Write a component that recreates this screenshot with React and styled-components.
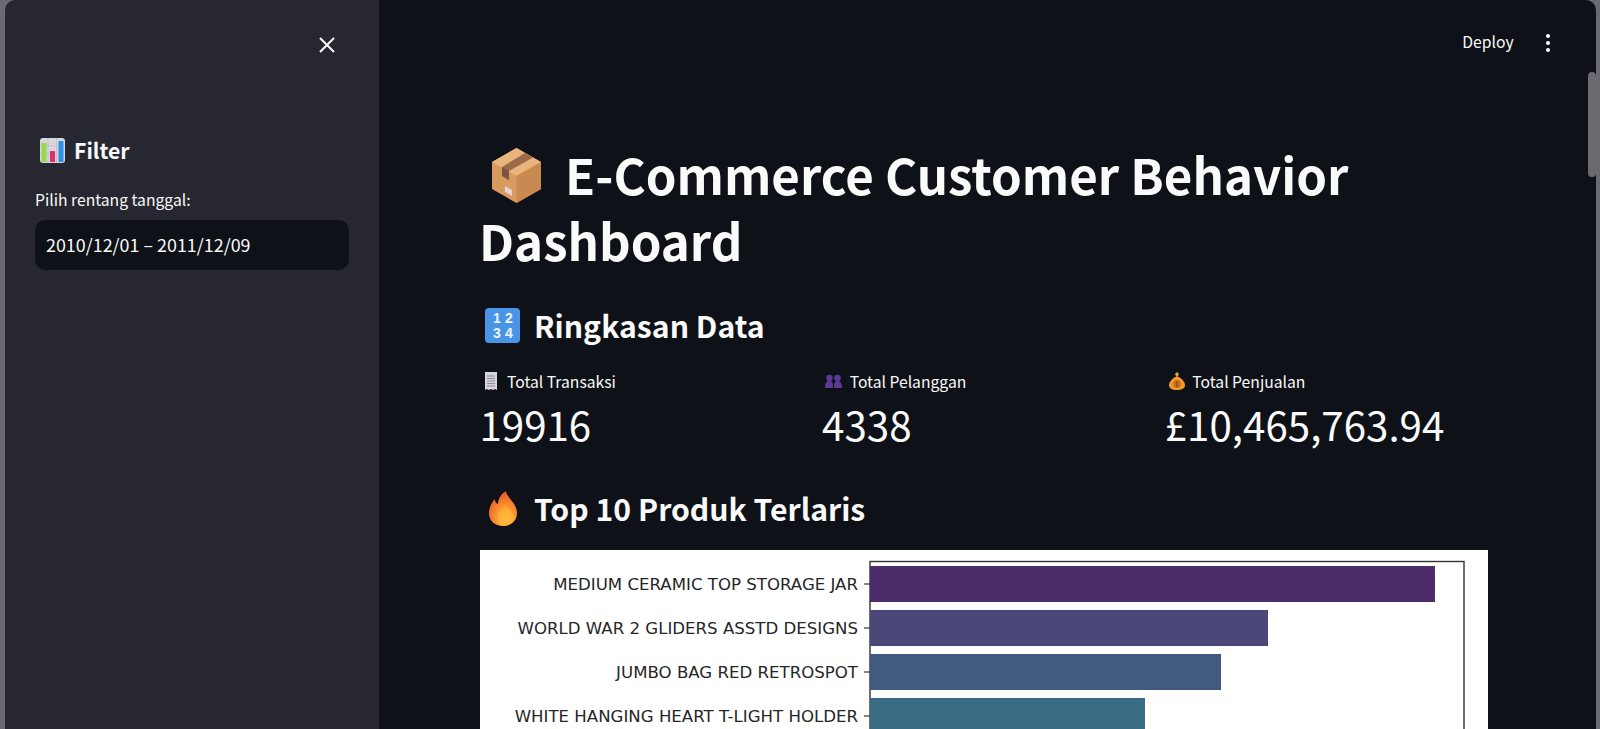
import React from 'react';
import styled, { createGlobalStyle } from 'styled-components';

const FONT = '"Noto Sans CJK JP", "Noto Sans", sans-serif';

const GlobalStyle = createGlobalStyle`
  html, body {
    margin: 0;
    height: 100%;
    overflow: hidden;
    background: #6a6b70;
  }
  #root {
    height: 100%;
  }
`;

const Window = styled.div`
  display: flex;
  height: 729px;
  padding: 0 4px 0 5px;
  font-family: ${FONT};
  color: #fafafa;
`;

const Sidebar = styled.aside`
  flex: 0 0 374px;
  box-sizing: border-box;
  padding: 0 30px 0 30px;
  background: #262730;
  border-top-left-radius: 10px;
`;

const CloseRow = styled.div`
  display: flex;
  justify-content: flex-end;
  height: 137px;
  padding: 36px 13px 0 0;
  box-sizing: border-box;
`;

const SideTitle = styled.h3`
  display: flex;
  align-items: center;
  gap: 9px;
  height: 26px;
  margin: 0 0 25px 5px;
  font-size: 21.2px;
  line-height: 26px;
  font-weight: 600;
`;

const FieldLabel = styled.label`
  display: block;
  font-size: 15.7px;
  line-height: 24px;
  margin-bottom: 8px;
`;

const DateInput = styled.div`
  box-sizing: border-box;
  height: 50px;
  width: 314px;
  padding: 0 11px 2px;
  display: flex;
  align-items: center;
  background: #0e1117;
  border-radius: 10px;
  font-size: 17.9px;
`;

const Main = styled.main`
  flex: 1;
  position: relative;
  min-width: 0;
  overflow: hidden;
  background: #0e1117;
  border-top-right-radius: 10px;
`;

const TopBar = styled.header`
  display: flex;
  justify-content: flex-end;
  align-items: center;
  gap: 32px;
  height: 86px;
  padding-right: 46px;
  font-size: 15.7px;
  span {
    margin-bottom: 4px;
  }
`;

const MenuDots = styled.div`
  display: flex;
  flex-direction: column;
  gap: 2.6px;
  i {
    display: block;
    width: 4.4px;
    height: 4.4px;
    border-radius: 50%;
    background: #fafafa;
  }
`;

const Scrollbar = styled.div`
  position: absolute;
  top: 72px;
  right: 0;
  width: 8px;
  height: 105px;
  background: #6a6b70;
  border-radius: 4px;
`;

const Content = styled.div`
  width: 1008px;
  margin-left: 101px;
`;

const Title = styled.h1`
  margin: 55px 0 0 -1px;
  font-size: 49.2px;
  line-height: 66px;
  font-weight: 700;
  letter-spacing: 0;
`;

const TitleIcon = styled.span`
  display: inline-block;
  width: 86px;
  height: 55px;
  vertical-align: -8px;
  padding-left: 13px;
  box-sizing: border-box;
`;

const Section = styled.h2`
  display: flex;
  align-items: center;
  gap: ${props => props.$gap}px;
  height: 44px;
  margin: ${props => props.$top}px 0 0;
  padding-left: ${props => props.$indent}px;
  font-size: 30.2px;
  line-height: 44px;
  font-weight: 600;
`;

const Metrics = styled.div`
  display: grid;
  grid-template-columns: repeat(3, 1fr);
  column-gap: 20px;
  margin-top: 21px;
`;

const MetricLabel = styled.div`
  display: flex;
  align-items: center;
  gap: ${props => props.$gap}px;
  height: 26px;
  padding-left: ${props => props.$pad}px;
  font-size: 15.7px;
`;

const MetricValue = styled.div`
  font-size: 40.3px;
  line-height: 60px;
  margin-left: -0.6px;
`;

const ChartFrame = styled.div`
  margin-top: 20px;
  height: 179px;
  background: #fff;
  overflow: hidden;
`;

const Box = styled.svg`
  display: block;
  flex: none;
`;

const ChartLabel = styled.text`
  font-family: "DejaVu Sans", sans-serif;
  font-size: 16.6px;
  fill: #262626;
`;

const BARS = [
  { label: 'MEDIUM CERAMIC TOP STORAGE JAR', width: 565, color: '#4c2c69' },
  { label: 'WORLD WAR 2 GLIDERS ASSTD DESIGNS', width: 398, color: '#4b4779' },
  { label: 'JUMBO BAG RED RETROSPOT', width: 351, color: '#435a80' },
  { label: 'WHITE HANGING HEART T-LIGHT HOLDER', width: 275, color: '#3a6c85' },
];

const Chart = () => (
  <svg width="1008" height="179" viewBox="0 0 1008 179">
    <rect x="390" y="11.5" width="594" height="180" fill="none" stroke="#333" strokeWidth="1.4" />
    {BARS.map((bar, i) => {
      const y = 16 + i * 44;
      return (
        <g key={bar.label}>
          <rect x="390" y={y} width={bar.width} height="36" fill={bar.color} />
          <line x1="384" x2="390" y1={y + 18} y2={y + 18} stroke="#333" strokeWidth="1.2" />
          <ChartLabel x="378" y={y + 24} textAnchor="end">{bar.label}</ChartLabel>
        </g>
      );
    })}
  </svg>
);

const CloseIcon = () => (
  <Box width="18" height="18" viewBox="0 0 18 18">
    <path d="M2 2 L16 16 M16 2 L2 16" stroke="#fafafa" strokeWidth="2" strokeLinecap="butt" />
  </Box>
);

const ChartEmoji = () => (
  <Box width="25" height="25" viewBox="0 0 25 25">
    <rect width="25" height="25" rx="3" fill="#d9d6de" />
    <path d="M0 8H25M0 16H25M8 0V25M16.500 0V25" stroke="#c4c0ca" strokeWidth="1" />
    <rect x="1.500" y="5" width="5" height="19" fill="#96d74c" />
    <rect x="10" y="13" width="5" height="11" fill="#e0316f" />
    <rect x="18.500" y="3" width="5" height="21" fill="#2f8fe6" />
  </Box>
);

const PackageEmoji = () => (
  <Box width="49" height="55" viewBox="0 0 49 55">
    <path d="M24.500 0 L49 14 V41 L24.500 55 L0 41 V14 Z" fill="#d99a5f" />
    <path d="M24.500 0 L49 14 L24.500 28 L0 14 Z" fill="#e8b57c" />
    <path d="M24.500 28 L49 14 V41 L24.500 55 Z" fill="#c98a52" />
    <path d="M33 5 L10 19 V28 L17 32 V23 L41 9.500 Z" fill="#9c6a48" />
    <path d="M10 19 L17 23 V32 L10 28 Z" fill="#7d5640" />
    <path d="M13 38 L20 42 V48 L13 44 Z" fill="#e6d3d8" />
  </Box>
);

const KeycapEmoji = () => (
  <Box width="35" height="35" viewBox="0 0 35 35">
    <rect width="35" height="35" rx="4" fill="#4a94e6" />
    <g fontFamily='"Liberation Sans", sans-serif' fontSize="14" fontWeight="700" fill="#eef5fc" textAnchor="middle">
      <text x="12" y="15">1</text>
      <text x="24" y="15">2</text>
      <text x="12" y="30">3</text>
      <text x="24" y="30">4</text>
    </g>
  </Box>
);

const ReceiptEmoji = () => (
  <Box width="14" height="18" viewBox="0 0 14 18">
    <path d="M1 0 H13 V18 L11 17 L9 18 L7 17 L5 18 L3 17 L1 18 Z" fill="#d8d4dc" />
    <path d="M3 4H11M3 6.500H11M3 9H11M3 11.500H11M3 14H11" stroke="#8f8b98" strokeWidth="1" />
  </Box>
);

const BustsEmoji = () => (
  <Box width="17" height="14" viewBox="0 0 17 14">
    <g fill="#5a3c96">
      <circle cx="4.500" cy="4" r="3.300" />
      <circle cx="12.500" cy="4" r="3.300" />
      <path d="M0 14 C0 8 2 7 4.500 7 C7 7 8 8 8 14 Z" />
      <path d="M9 14 C9 8 10 7 12.500 7 C15 7 17 8 17 14 Z" />
    </g>
  </Box>
);

const MoneyEmoji = () => (
  <Box width="16" height="18" viewBox="0 0 16 18">
    <path d="M8 0 L10 2 L8.500 5 H7.500 L6 2 Z" fill="#e3a13a" />
    <path d="M6 5 H10 C13 7 16 10 16 13 C16 16.500 13 18 8 18 C3 18 0 16.500 0 13 C0 10 3 7 6 5 Z" fill="#f09a2c" />
    <circle cx="8" cy="12" r="4" fill="#c9701f" />
    <path d="M8 9V15" stroke="#7d3f10" strokeWidth="1" />
  </Box>
);

const FireEmoji = () => (
  <Box width="28" height="35" viewBox="0 0 28 35">
    <defs>
      <radialGradient id="flame" cx="0.6" cy="0.8" r="0.8">
        <stop offset="0" stopColor="#ffd23f" />
        <stop offset="0.5" stopColor="#fb8c2e" />
        <stop offset="1" stopColor="#e2552f" />
      </radialGradient>
    </defs>
    <path
      d="M17 0 C17 6 28 12 28 22 C28 30 22 35 14 35 C6 35 0 30 0 22 C0 16 3 11 6 8 C6 11 7 12 9 13 C9 8 12 3 17 0 Z"
      fill="url(#flame)"
    />
    <path d="M17 13 C18 18 24 21 24 26 C24 31 20 35 15 35 C10 35 8 31 9 26 C10 21 15 18 17 13 Z" fill="#ffb13a" opacity="0.7" />
  </Box>
);

const METRICS = [
  { icon: <ReceiptEmoji />, pad: 4, gap: 9, label: 'Total Transaksi', value: '19916' },
  { icon: <BustsEmoji />, pad: 2, gap: 8, label: 'Total Pelanggan', value: '4338' },
  { icon: <MoneyEmoji />, pad: 4, gap: 7, label: 'Total Penjualan', value: '£10,465,763.94' },
];

export default function App() {
  return (
    <Window>
      <GlobalStyle />
      <Sidebar>
        <CloseRow><CloseIcon /></CloseRow>
        <SideTitle><ChartEmoji />Filter</SideTitle>
        <FieldLabel>Pilih rentang tanggal:</FieldLabel>
        <DateInput>2010/12/01 – 2011/12/09</DateInput>
      </Sidebar>
      <Main>
        <TopBar>
          <span>Deploy</span>
          <MenuDots><i /><i /><i /></MenuDots>
        </TopBar>
        <Scrollbar />
        <Content>
          <Title>
            <TitleIcon><PackageEmoji /></TitleIcon>E-Commerce Customer Behavior Dashboard
          </Title>
          <Section $top={30} $indent={5} $gap={14}><KeycapEmoji />Ringkasan Data</Section>
          <Metrics>
            {METRICS.map(m => (
              <div key={m.label}>
                <MetricLabel $pad={m.pad} $gap={m.gap}>{m.icon}{m.label}</MetricLabel>
                <MetricValue>{m.value}</MetricValue>
              </div>
            ))}
          </Metrics>
          <Section $top={32} $indent={9} $gap={17}><FireEmoji />Top 10 Produk Terlaris</Section>
          <ChartFrame><Chart /></ChartFrame>
        </Content>
      </Main>
    </Window>
  );
}
